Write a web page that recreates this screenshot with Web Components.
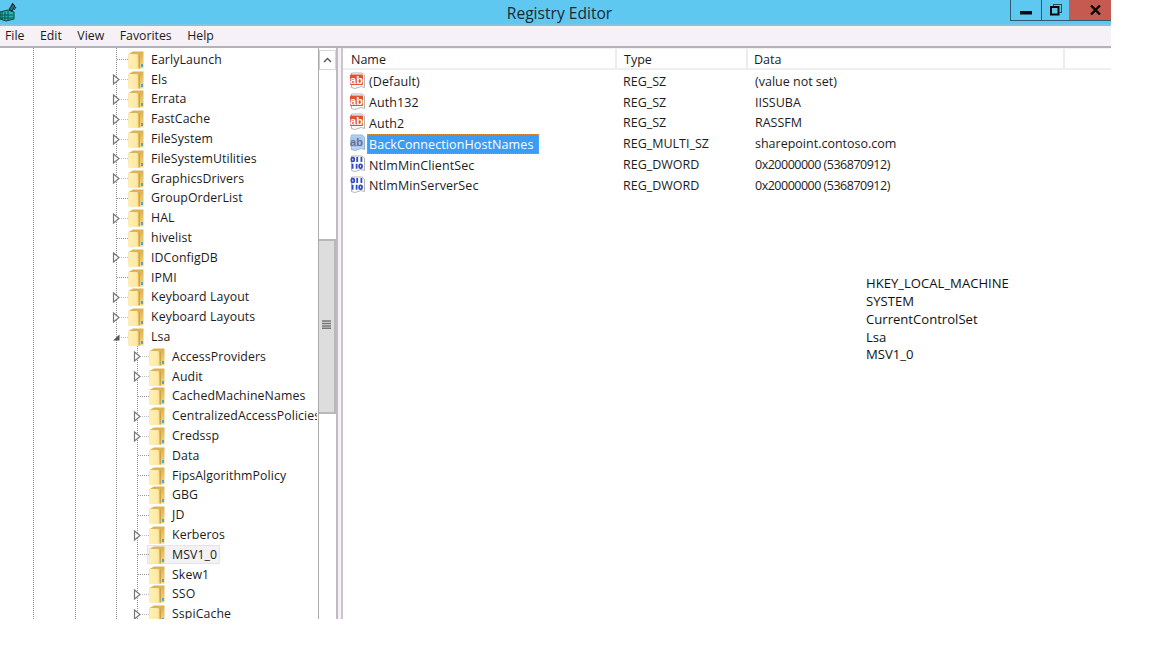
<!DOCTYPE html>
<html>
<head>
<meta charset="utf-8">
<title>Registry Editor</title>
<style>
html, body { margin: 0; padding: 0; background: #ffffff; }
body { width: 1152px; height: 648px; overflow: hidden; font-family: "Open Sans", "Noto Sans", sans-serif; color: #1c1c1c; }
</style>
</head>
<body>
<reg-window></reg-window>
<script>
const FOLDER = `<svg width="17" height="18" viewBox="0 0 17 18" fill="none" xmlns="http://www.w3.org/2000/svg">
  <defs>
    <linearGradient id="fl" x1="0" y1="0" x2="1" y2="0"><stop offset="0" stop-color="#fff0b4"/><stop offset="0.75" stop-color="#ffeaa6"/><stop offset="1" stop-color="#f7dc8c"/></linearGradient>
    <linearGradient id="fr" x1="0" y1="0" x2="0" y2="1"><stop offset="0" stop-color="#d9b052"/><stop offset="1" stop-color="#f6d680"/></linearGradient>
  </defs>
  <path d="M0.5 3 L5 0.5 H15.5 V17.5 H0.5 Z" fill="url(#fr)"/>
  <path d="M0.5 3 H9 L10.5 4.5 V17.5 H0.5 Z" fill="url(#fl)"/>
  <path d="M10.5 4.5 L12 3 V17.5 H10.5 Z" fill="#cfa344"/>
  <rect x="13" y="13" width="2" height="3" fill="#45a8d8"/>
</svg>`;

class TreeRow extends HTMLElement {
  constructor() {
    super();
    this.attachShadow({ mode: "open" });
    const state = this.getAttribute("state") || "leaf";
    const indent = this.hasAttribute("child") ? 21 : 0;
    const selected = this.hasAttribute("selected");
    const glyph = {
      closed: `<svg width="9" height="11" viewBox="0 0 9 11"><path d="M1.5 1 L7 5.5 L1.5 10 Z" fill="#ffffff" stroke="#777777" stroke-width="1.2"/></svg>`,
      open: `<svg width="9" height="11" viewBox="0 0 9 11"><path d="M1 8.5 L7.5 8.5 L7.5 2.5 Z" fill="#555555"/></svg>`,
      leaf: ""
    }[state];
    this.shadowRoot.innerHTML = `<style>
:host { display: block; height: 19.8px; font-size: 12.3px; }
.row { display: flex; align-items: center; height: 19.8px; padding-left: ${112 + indent}px; position: relative; }
.exp { width: 9px; height: 11px; flex: none; display: flex; }
.dash { width: 7px; flex: none; height: 0; border-top: 1px dotted ${state === "leaf" ? "#999999" : "#bbbbbb"}; margin-left: ${state === "leaf" ? "-4px" : "0"}; }
.leaf-dash { width: 11px; }
.folder { width: 17px; height: 18px; flex: none; display: flex; background: #ffffff; }
.label { margin-left: 5px; padding: 0 1px; box-sizing: border-box; line-height: 18px; white-space: nowrap; letter-spacing: 0.1px; background: #ffffff; overflow: hidden; max-width: ${317 - 150 - indent}px; }
.sel { position: absolute; left: ${126 + indent}px; top: 0; width: 73px; height: 19px; background: #f3f1f3; border: 1px solid #e6e4e6; box-sizing: border-box; }
.sel ~ * { position: relative; }
.sel ~ .label, .sel ~ .folder { background: transparent; }
</style>
<div class="row">
  ${selected ? '<div class="sel"></div>' : ""}
  <span class="exp">${glyph}</span>
  <span class="dash ${state === "leaf" ? "leaf-dash" : ""}"></span>
  <span class="folder">${FOLDER}</span>
  <span class="label"><slot></slot></span>
</div>`;
  }
}
customElements.define("tree-row", TreeRow);

class TreeScrollbar extends HTMLElement {
  constructor() {
    super();
    this.attachShadow({ mode: "open" });
    this.shadowRoot.innerHTML = `<style>
:host { display: flex; flex-direction: column; width: 18px; flex: none; box-sizing: border-box; border-left: 1px solid #aaaaaa; background: #ffffff; }
.up { height: 18px; margin-top: 2px; flex: none; display: flex; align-items: center; justify-content: center; border: 1px solid #d8d8d8; border-left-color: #cccccc; background: #ffffff; }
.gap { height: 169px; flex: none; }
.thumb { height: 175px; flex: none; background: #dddddd; border-top: 2px solid #b8b8b8; border-bottom: 2px solid #b8b8b8; border-right: 2px solid #b8b8b8; box-sizing: border-box; display: flex; align-items: center; justify-content: center; padding-bottom: 5px; }
</style>
<div class="up"><svg width="9" height="6" viewBox="0 0 9 6"><path d="M1 5 L4.5 1.5 L8 5" fill="none" stroke="#555555" stroke-width="1.4"/></svg></div>
<div class="gap"></div>
<div class="thumb"><svg width="9" height="9" viewBox="0 0 9 9"><path d="M0 1 H9 M0 3.5 H9 M0 6 H9 M0 8.2 H9" stroke="#777777" stroke-width="1.4"/></svg></div>`;
  }
}
customElements.define("tree-scrollbar", TreeScrollbar);

class TreePane extends HTMLElement {
  constructor() {
    super();
    this.attachShadow({ mode: "open" });
    const dot = (x, y) => `linear-gradient(to bottom, #8f8f8f 50%, transparent 50%) ${x}px ${y}px / 1px 2px repeat-y`;
    this.shadowRoot.innerHTML = `<style>
:host { display: flex; width: 336px; height: 571px; flex: none; overflow: hidden; background: #ffffff; }
.tree { flex: 1; min-width: 0; overflow: hidden; padding-top: 2px; box-sizing: border-box; background: ${dot(33, 0)}, ${dot(75, 0)}, ${dot(116, 0)}; position: relative; }
.guide { position: absolute; left: 137px; top: 298px; bottom: 0; width: 1px; background: linear-gradient(to bottom, #8f8f8f 50%, transparent 50%) 0 0 / 1px 2px repeat-y; }
</style>
<div class="tree"><div class="guide"></div><slot></slot></div>
<tree-scrollbar></tree-scrollbar>`;
  }
}
customElements.define("tree-pane", TreePane);

class ValueIcon extends HTMLElement {
  constructor() {
    super();
    this.attachShadow({ mode: "open" });
    const kind = this.getAttribute("kind");
    const on = this.hasAttribute("selected");
    const page = `<path d="M2.5 1 H13 L15.5 3 V15.5 Q12 13.5 9 15.5 T2.5 15.5 Z" fill="${on ? "#b9d7f2" : "#ffffff"}" stroke="${on ? "#8fb6dd" : "#b5b5b5"}"/>`;
    const body = kind === "ab"
      ? `<rect x="1" y="2.5" width="13" height="10.5" rx="1" fill="${on ? "#a9c8ea" : "#e2512f"}"/>
         <text x="7.5" y="11.5" text-anchor="middle" font-family="'Liberation Sans',sans-serif" font-weight="700" font-size="11" fill="${on ? "#6f6a96" : "#ffffff"}">ab</text>`
      : `<g fill="none" stroke="#2f4cc0" stroke-width="1.8">
           <rect x="2.4" y="2.6" width="2.8" height="3.8" rx="1.2"/><path d="M8.2 2 V7 M12.4 2 V7"/>
           <path d="M3.6 8.8 V13.8 M7.6 8.8 V13.8"/><rect x="10.2" y="9.4" width="2.8" height="3.8" rx="1.2"/>
         </g>`;
    this.shadowRoot.innerHTML = `<style>:host { display: block; width: 17px; height: 17px; flex: none; margin-top: -2px; } svg { display: block; }</style>
<svg width="17" height="17" viewBox="0 0 17 17" fill="none">${page}${body}</svg>`;
  }
}
customElements.define("value-icon", ValueIcon);

class ValueRow extends HTMLElement {
  constructor() {
    super();
    this.attachShadow({ mode: "open" });
    const on = this.hasAttribute("selected");
    const hex = this.getAttribute("data").startsWith("0x");
    this.shadowRoot.innerHTML = `<style>
:host { display: grid; grid-template-columns: 273px 132px auto; height: 20.8px; align-items: center; font-size: 12.5px; }
.name { display: flex; align-items: center; padding-left: 6px; }
.txt { margin-left: 1px; padding: 0 5px 0 1px; height: 20px; line-height: 19px; box-sizing: border-box; letter-spacing: 0.1px; white-space: nowrap; border: 1px solid transparent; }
.on { background: #3a9cf4; color: #ffffff; border: 1px dotted #d98f3c; }
.type { padding-left: 7px; }
.data { padding-left: 7px; white-space: nowrap; letter-spacing: ${hex ? "-0.5px" : "0"}; }
</style>
<div class="name"><value-icon kind="${this.getAttribute("kind")}" ${on ? "selected" : ""}></value-icon><span class="txt ${on ? "on" : ""}">${this.getAttribute("name")}</span></div>
<div class="type">${this.getAttribute("type")}</div>
<div class="data">${this.getAttribute("data")}</div>`;
  }
}
customElements.define("value-row", ValueRow);

class ListHeader extends HTMLElement {
  constructor() {
    super();
    this.attachShadow({ mode: "open" });
    this.shadowRoot.innerHTML = `<style>
:host { display: flex; height: 22px; flex: none; box-sizing: border-box; border-bottom: 2px solid #efefef; border-top: 1px solid #f2f2f2; font-size: 12.5px; }
div { box-sizing: border-box; line-height: 22px; border-right: 2px solid #ececec; }
.rest { border-right: 0; flex: 1; }
</style>
<div style="width:274px;padding-left:8px">Name</div><div style="width:131px;padding-left:7px">Type</div><div style="width:317px;padding-left:6px">Data</div><div class="rest"></div>`;
  }
}
customElements.define("list-header", ListHeader);

class ListPane extends HTMLElement {
  constructor() {
    super();
    this.attachShadow({ mode: "open" });
    this.shadowRoot.innerHTML = `<style>
:host { display: flex; flex-direction: column; flex: 1; min-width: 0; height: 571px; background: #ffffff; }
.rows { padding-top: 1px; }
.note { margin: 79px 0 0 523px; font-family: "Open Sans", "Noto Sans", sans-serif; font-size: 13.1px; line-height: 17.9px; color: #111111; }
.note div { white-space: nowrap; }
</style>
<list-header></list-header>
<div class="rows"><slot></slot></div>
<div class="note">
  <div>HKEY_LOCAL_MACHINE</div><div>SYSTEM</div><div>CurrentControlSet</div><div>Lsa</div><div>MSV1_0</div>
</div>`;
  }
}
customElements.define("list-pane", ListPane);

class TitleBar extends HTMLElement {
  constructor() {
    super();
    this.attachShadow({ mode: "open" });
    this.shadowRoot.innerHTML = `<style>
:host { display: flex; height: 26px; box-sizing: border-box; background: #5fc8f0; border-bottom: 2px solid #86c2e2; position: relative; }
.icon { position: absolute; left: -1px; top: 2px; }
.title { flex: 1; text-align: center; padding-left: 109px; font-size: 15.6px; line-height: 26px; color: #1a2a33; }
.btns { display: flex; height: 21px; flex: none; align-items: stretch; }
.b { box-sizing: border-box; display: flex; align-items: center; justify-content: center; border-bottom: 1px solid #2f5a70; border-left: 1px solid #2f5a70; }
.min { width: 31px; padding-top: 5px; }
.max { width: 28px; }
.close { width: 42px; background: #c75a50; border-left: 0; padding-left: 10px; }
</style>
<svg class="icon" width="19" height="20" viewBox="0 0 19 20">
  <path d="M1 10 L9 8 L15 10 V17 L7 19 L1 17 Z" fill="#26b7ac" stroke="#123c3c"/>
  <path d="M3 10 V18 M6 10 V18 M9 9 V18 M1 13 H14 M1 16 H14" stroke="#0e4b4b" stroke-width="0.9"/>
  <path d="M10 7 L14 2 L16 4 L13 9 Z" fill="#2b6f77" stroke="#101f22"/>
  <path d="M12 4 L14 1 M15 8 L17 5" stroke="#101f22"/>
</svg>
<div class="title">Registry Editor</div>
<div class="btns">
  <div class="b min"><svg width="12" height="4"><rect width="12" height="3.5" fill="#0a0a0a"/></svg></div>
  <div class="b max"><svg width="12" height="12" viewBox="0 0 12 12"><rect x="3.5" y="0.5" width="8" height="8" fill="none" stroke="#2b4a55"/><rect x="1" y="3" width="7.5" height="7.5" fill="#5fc8f0" stroke="#0a0a0a" stroke-width="2"/></svg></div>
  <div class="b close"><svg width="11" height="10" viewBox="0 0 11 10"><path d="M1 0.5 L10 9.5 M10 0.5 L1 9.5" stroke="#0a0a0a" stroke-width="2.4"/></svg></div>
</div>`;
  }
}
customElements.define("title-bar", TitleBar);

class MenuBar extends HTMLElement {
  constructor() {
    super();
    this.attachShadow({ mode: "open" });
    this.shadowRoot.innerHTML = `<style>
:host { display: flex; gap: 15.5px; height: 22px; box-sizing: border-box; padding-left: 5px; background: #f5f1f6; border-bottom: 2px solid #b4b1b8; font-size: 12.3px; line-height: 20px; }
</style>
<span>File</span><span>Edit</span><span>View</span><span>Favorites</span><span>Help</span>`;
  }
}
customElements.define("menu-bar", MenuBar);

class RegWindow extends HTMLElement {
  constructor() {
    super();
    this.attachShadow({ mode: "open" });
    const top = [
      ["EarlyLaunch", "leaf"], ["Els", "closed"], ["Errata", "closed"], ["FastCache", "closed"],
      ["FileSystem", "closed"], ["FileSystemUtilities", "closed"], ["GraphicsDrivers", "closed"],
      ["GroupOrderList", "leaf"], ["HAL", "closed"], ["hivelist", "leaf"], ["IDConfigDB", "closed"],
      ["IPMI", "leaf"], ["Keyboard Layout", "closed"], ["Keyboard Layouts", "closed"], ["Lsa", "open"]
    ];
    const kids = [
      ["AccessProviders", "closed"], ["Audit", "closed"], ["CachedMachineNames", "leaf"],
      ["CentralizedAccessPolicies", "closed"], ["Credssp", "closed"], ["Data", "leaf"],
      ["FipsAlgorithmPolicy", "leaf"], ["GBG", "leaf"], ["JD", "leaf"], ["Kerberos", "closed"],
      ["MSV1_0", "leaf", true], ["Skew1", "leaf"], ["SSO", "closed"], ["SspiCache", "closed"]
    ];
    const values = [
      ["ab", "(Default)", "REG_SZ", "(value not set)"],
      ["ab", "Auth132", "REG_SZ", "IISSUBA"],
      ["ab", "Auth2", "REG_SZ", "RASSFM"],
      ["ab", "BackConnectionHostNames", "REG_MULTI_SZ", "sharepoint.contoso.com", true],
      ["bin", "NtlmMinClientSec", "REG_DWORD", "0x20000000 (536870912)"],
      ["bin", "NtlmMinServerSec", "REG_DWORD", "0x20000000 (536870912)"]
    ];
    const treeRows = top.map(([t, s]) => `<tree-row state="${s}">${t}</tree-row>`).join("") +
      kids.map(([t, s, sel]) => `<tree-row child state="${s}" ${sel ? "selected" : ""}>${t}</tree-row>`).join("");
    const valueRows = values.map(([k, n, t, d, sel]) =>
      `<value-row kind="${k}" name="${n}" type="${t}" data="${d}" ${sel ? "selected" : ""}></value-row>`).join("");
    this.shadowRoot.innerHTML = `<style>
:host { display: block; width: 1111px; }
.panes { display: flex; height: 571px; }
.split { width: 7px; flex: none; box-sizing: border-box; background: #f5f1f6; border-left: 2px solid #bdbac2; border-right: 2px solid #c9c6d2; }
</style>
<title-bar></title-bar>
<menu-bar></menu-bar>
<div class="panes">
  <tree-pane>${treeRows}</tree-pane>
  <div class="split"></div>
  <list-pane>${valueRows}</list-pane>
</div>`;
  }
}
customElements.define("reg-window", RegWindow);
</script>
</body>
</html>
